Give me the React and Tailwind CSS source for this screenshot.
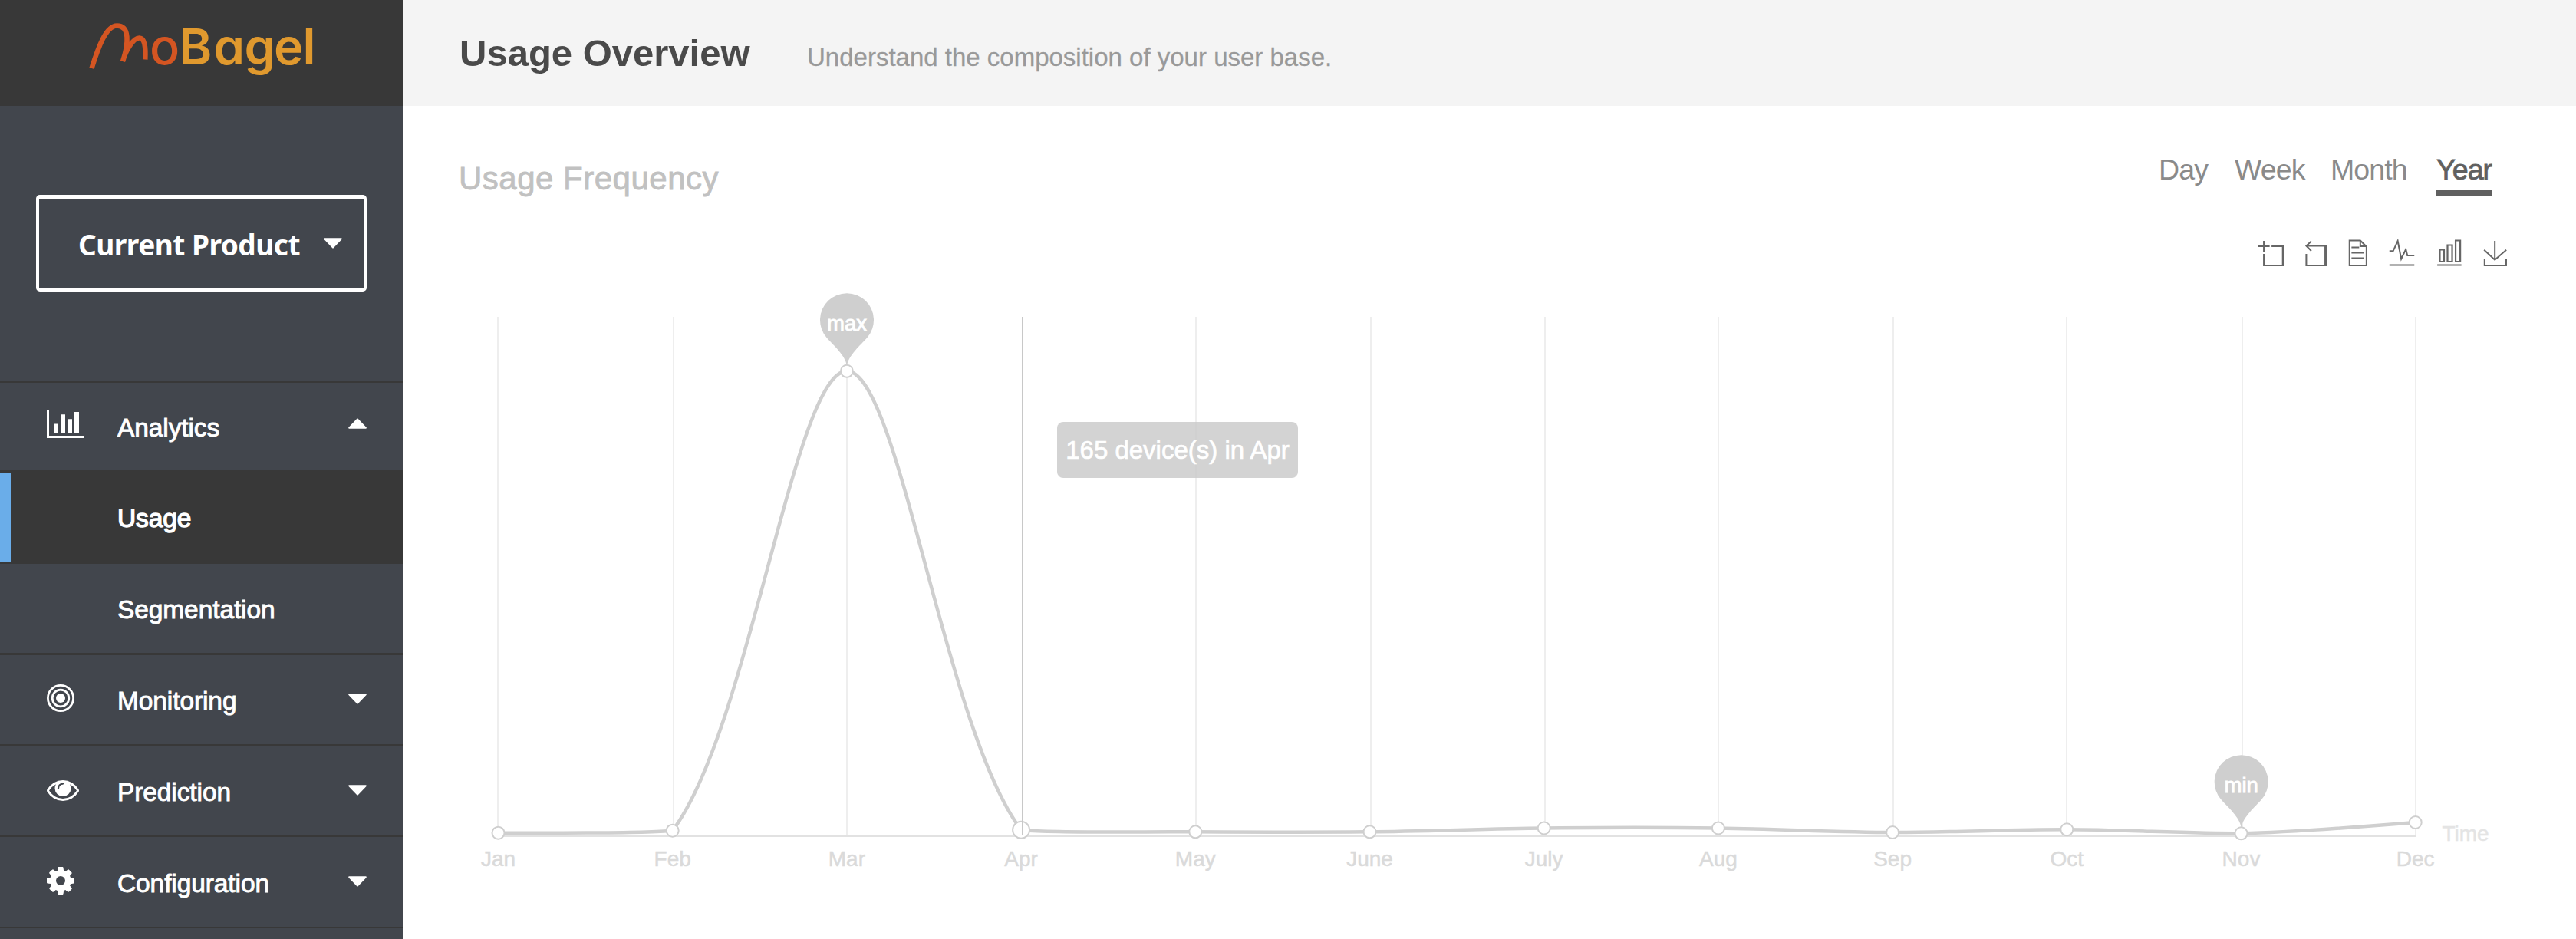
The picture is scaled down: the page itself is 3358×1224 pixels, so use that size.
import React from "react";

const sans = "font-['Liberation_Sans',Arial,sans-serif]";

const months = [
  { name: "Jan", y: 1085.7, grid: 648 },
  { name: "Feb", y: 1082.7, grid: 877 },
  { name: "Mar", y: 483.8, grid: 1103 },
  { name: "Apr", y: 1081.7, grid: 1332 },
  { name: "May", y: 1084.3, grid: 1558 },
  { name: "June", y: 1084.3, grid: 1786 },
  { name: "July", y: 1079.5, grid: 2013 },
  { name: "Aug", y: 1079.5, grid: 2239 },
  { name: "Sep", y: 1085, grid: 2467 },
  { name: "Oct", y: 1081.3, grid: 2693 },
  { name: "Nov", y: 1086.3, grid: 2922 },
  { name: "Dec", y: 1072, grid: 3148 },
].map((m, i) => ({ ...m, x: 649.5 + i * 227.2 }));

const SMOOTH = 0.3;
const clampY = (v) => Math.min(1086.3, Math.max(483.8, v));

function smoothPath(pts) {
  const cps = pts.map((p, i) => {
    const a = pts[i - 1];
    const b = pts[i + 1];
    if (!a || !b) return [p, p];
    const vx = (b.x - a.x) * SMOOTH;
    const vy = (b.y - a.y) * SMOOTH;
    const d0 = Math.hypot(p.x - a.x, p.y - a.y);
    const d1 = Math.hypot(b.x - p.x, b.y - p.y);
    const s = d0 + d1;
    return [
      { x: p.x - (vx * d0) / s, y: clampY(p.y - (vy * d0) / s) },
      { x: p.x + (vx * d1) / s, y: clampY(p.y + (vy * d1) / s) },
    ];
  });
  let d = `M${pts[0].x} ${pts[0].y}`;
  for (let i = 1; i < pts.length; i++) {
    const c1 = cps[i - 1][1];
    const c2 = cps[i][0];
    d += ` C${c1.x} ${c1.y} ${c2.x} ${c2.y} ${pts[i].x} ${pts[i].y}`;
  }
  return d;
}

function Logo() {
  return (
    <svg width="525" height="138" viewBox="0 0 525 138" role="img" aria-label="MoBagel">
      <path
        d="M119.5 89 C128 62 138 33.5 152.5 33.5 C169 33.5 168 56 160 80 C164 65 174 49.5 181.5 49.5 C189 49.5 190 62 189.3 77.5"
        fill="none"
        stroke="#d45522"
        strokeWidth="6.5"
      />
      <text x="195" y="84.3" fill="#d45522" fontSize="65" className="font-['Inter',sans-serif] font-medium">o</text>
      <text
        x="233.5 278.5 318.5 357 394.5"
        y="84.3"
        fill="#e0992e"
        fontSize="65"
        className="font-['Inter',sans-serif] font-semibold [font-feature-settings:'cv11']"
      >
        Bagel
      </text>
    </svg>
  );
}

function BarChartIcon() {
  return (
    <svg width="48" height="37" viewBox="0 128 2048 1536" preserveAspectRatio="none" fill="#fff">
      <path d="M640 896v512h-256v-512h256zm384-512v1024h-256v-1024h256zm1024 1152v128h-2048v-1536h128v1408h1920zm-640-896v768h-256v-768h256zm384-384v1152h-256v-1152h256z" />
    </svg>
  );
}

function BullseyeIcon() {
  return (
    <svg width="36" height="36" viewBox="0 0 36 36" fill="none" stroke="#fff">
      <circle cx="18" cy="18" r="6" fill="#fff" stroke="none" />
      <circle cx="18" cy="18" r="10.8" strokeWidth="2.8" />
      <circle cx="18" cy="18" r="16.6" strokeWidth="2.8" />
    </svg>
  );
}

function EyeIcon() {
  return (
    <svg width="42" height="27" viewBox="0 384 1792 1152" fill="#fff">
      <path d="M1664 960q-152-236-381-353 61 104 61 225 0 185-131.5 316.5t-316.5 131.5-316.5-131.5-131.5-316.5q0-121 61-225-229 117-381 353 133 205 333.5 326.5t434.5 121.5 434.5-121.5 333.5-326.5zm-720-384q0-20-14-34t-34-14q-125 0-214.5 89.5t-89.5 214.5q0 20 14 34t34 14 34-14 14-34q0-86 61-147t147-61q20 0 34-14t14-34zm848 384q0 34-20 69-140 230-376.5 368.5t-499.5 138.5-499.5-139-376.5-368q-20-35-20-69t20-69q140-229 376.5-368t499.5-139 499.5 139 376.5 368q20 35 20 69z" />
    </svg>
  );
}

function CogIcon() {
  return (
    <svg width="36" height="36" viewBox="128 128 1536 1536" fill="#fff">
      <path d="M1152 896q0-106-75-181t-181-75-181 75-75 181 75 181 181 75 181-75 75-181zm512-109v222q0 12-8 23t-20 13l-185 28q-19 54-39 91 35 50 107 138 10 12 10 25t-9 23q-27 37-99 108t-94 71q-12 0-26-9l-138-108q-44 23-91 38-16 136-29 186-7 28-36 28h-222q-14 0-24.5-8.5t-11.5-21.5l-28-184q-49-16-90-37l-141 107q-10 9-25 9-14 0-25-11-126-114-165-168-7-10-7-23 0-12 8-23 15-21 51-66.5t54-70.5q-27-50-41-99l-183-27q-13-2-21-12.5t-8-23.5v-222q0-12 8-23t19-13l186-28q14-46 39-92-40-57-107-138-10-12-10-24 0-10 9-23 26-36 98.5-107.5t94.5-71.5q13 0 26 10l138 107q44-23 91-38 16-136 29-186 7-28 36-28h222q14 0 24.5 8.5t11.5 21.5l28 184q49 16 90 37l142-107q9-9 24-9 13 0 25 10 129 119 165 170 7 8 7 22 0 12-8 23-15 21-51 66.5t-54 70.5q26 50 41 98l183 28q13 2 21 12.5t8 23.5z" />
    </svg>
  );
}

function Caret({ up = false }) {
  return (
    <svg width="24" height="14" viewBox="0 0 24 14" fill="#fff" stroke="#fff" strokeWidth="2" strokeLinejoin="round">
      <path d={up ? "M1.2 12.8 L12 1.4 L22.8 12.8 Z" : "M1.2 1.2 L22.8 1.2 L12 12.6 Z"} />
    </svg>
  );
}

function NavRow({ icon, label, height, up, labelShift, iconShift }) {
  return (
    <div className={`flex shrink-0 items-center pl-[61px] pr-[47px] ${height}`}>
      <div className={`w-[92px] ${iconShift}`}>{icon}</div>
      <div className={`flex-1 text-[33.5px] leading-[40px] tracking-[-0.1px] text-white [-webkit-text-stroke:0.9px_#fff] ${labelShift}`}>{label}</div>
      {up !== undefined && (
        <div className={up ? "-mt-[8px]" : "-mt-[2px]"}>
          <Caret up={up} />
        </div>
      )}
    </div>
  );
}

function Sidebar() {
  return (
    <aside className="flex h-[1224px] w-[525px] shrink-0 flex-col overflow-hidden bg-[#42464d]">
      <div className="h-[138px] shrink-0 bg-[#383838]">
        <Logo />
      </div>
      <div className="h-[359px] shrink-0 pl-[47px] pt-[116px]">
        <button className="flex h-[126px] w-[431px] items-center justify-between rounded-[5px] border-[4px] border-t-[5px] border-b-[5px] border-white pl-[51px] pr-[28px]">
          <span className="mt-[3px] whitespace-nowrap font-['Noto_Sans',sans-serif] text-[37px] font-bold leading-[48px] tracking-[-0.5px] text-white">
            Current Product
          </span>
          <span>
            <Caret />
          </span>
        </button>
      </div>
      <div className="h-[2px] shrink-0 bg-[#383838]" />
      <NavRow icon={<BarChartIcon />} label="Analytics" height="h-[114px]" up labelShift="mt-[3px]" iconShift="-mt-[7px]" />
      <div className="flex h-[122px] shrink-0 items-center bg-[#383838]">
        <div className="h-[116px] w-[14px] bg-[#6aade9]" />
        <div className="ml-[139px] mt-[4px] text-[33.5px] leading-[40px] tracking-[-0.1px] text-white [-webkit-text-stroke:1.3px_#fff]">Usage</div>
      </div>
      <NavRow icon={null} label="Segmentation" height="h-[116px]" labelShift="mt-[3px]" iconShift="" />
      <div className="h-[3px] shrink-0 bg-[#383838]" />
      <NavRow icon={<BullseyeIcon />} label="Monitoring" height="h-[116px]" up={false} labelShift="mt-[4px]" iconShift="-mt-[5px]" />
      <div className="h-[2px] shrink-0 bg-[#383838]" />
      <NavRow icon={<EyeIcon />} label="Prediction" height="h-[117px]" up={false} labelShift="mt-[4px]" iconShift="" />
      <div className="h-[2px] shrink-0 bg-[#383838]" />
      <NavRow icon={<CogIcon />} label="Configuration" height="h-[117px]" up={false} labelShift="mt-[4px]" iconShift="-mt-[4px]" />
      <div className="h-[2px] shrink-0 bg-[#383838]" />
    </aside>
  );
}

function Toolbox() {
  return (
    <svg width="334" height="40" viewBox="2938 310 332 40" preserveAspectRatio="none" fill="none" stroke="#666" strokeWidth="2">
      <path d="M2950 314V328.500M2942.500 321H2957.500M2960 321H2975V346H2950V331" />
      <path d="M2975 320.500V346" strokeWidth="3" />
      <path d="M3011.500 314.500L3005 320.500L3011.500 327M3005 320.500H3031V346H3005V331" />
      <path d="M3030 320.500V346" strokeWidth="3" />
      <path d="M3061 313.500H3075L3083 321.500V346H3061ZM3075 313.500V321H3083M3063.600 322.500H3073.500M3063.600 329.500H3080M3063.600 336.500H3080" />
      <path d="M3112.700 327.300H3117.500L3123.500 314L3128 337.500L3134 325L3136 333H3145M3112.700 345.500H3145" />
      <path d="M3178 325.500H3183.500V341H3178ZM3188 319.500H3194V341H3188ZM3198.500 313.500H3204.500V341H3198.500ZM3174.700 345.500H3206" strokeWidth="2.200" />
      <path d="M3249.300 314V338.500M3235.400 325.700L3249.300 338.700L3264.200 325.700M3236 337.700V346H3264V337.700" />
    </svg>
  );
}

function Pin({ x, y, label }) {
  return (
    <g transform={`translate(${x} ${y})`}>
      <path d="M0 60C-2 46 -17.500 33.400 -26.500 23A35 35 0 1 1 26.500 23C17.500 33.400 2 46 0 60Z" fill="#cfcfcf" />
      <text y="13.500" textAnchor="middle" fontSize="27.500" fill="#fff" stroke="#fff" strokeWidth="0.900">
        {label}
      </text>
    </g>
  );
}

function Chart() {
  return (
    <svg width="2833" height="844" viewBox="525 380 2833 844" className={sans}>
      {months.map((m) => (
        <rect key={m.name} x={m.grid} y="413" width="2" height="676" fill={m.name === "Apr" ? "#c8c8c8" : "#eeeeee"} />
      ))}
      <rect x="649" y="1089" width="2501" height="2" fill="#e2e2e2" />
      <path d={smoothPath(months)} fill="none" stroke="#cfcfcf" strokeWidth="4.500" />
      {months.map((m) => (
        <circle key={m.name} cx={m.x} cy={m.y} r={m.name === "Apr" ? 11 : 8} fill="#fff" stroke="#cfcfcf" strokeWidth="2" />
      ))}
      <rect x="1332" y="1070" width="2" height="19" fill="#c8c8c8" />
      <Pin x={1104} y={417} label="max" />
      <Pin x={2921.7} y={1019} label="min" />
      {months.map((m) => (
        <text key={m.name} x={m.x} y="1129" textAnchor="middle" fontSize="28" fill="#dadada" stroke="#dadada" strokeWidth="0.500">
          {m.name}
        </text>
      ))}
      <text x="3183.500" y="1096" fontSize="28" fill="#e4e4e4" stroke="#e4e4e4" strokeWidth="0.500">
        Time
      </text>
    </svg>
  );
}

export default function App() {
  return (
    <div className={`flex h-[1224px] w-[3358px] overflow-hidden bg-white ${sans}`}>
      <Sidebar />
      <main className="flex min-w-0 flex-1 flex-col">
        <header className="flex h-[138px] shrink-0 items-baseline bg-[#f4f4f4] pl-[74px] pt-[41px]">
          <h1 className="w-[453px] whitespace-nowrap text-[49px] font-bold leading-[56px] text-[#4a4a4a]">Usage Overview</h1>
          <p className="whitespace-nowrap text-[33px] text-[#999] [-webkit-text-stroke:0.3px_#999]">Understand the composition of your user base.</p>
        </header>
        <div className="flex h-[242px] shrink-0 justify-between pl-[73px]">
          <h2 className="mt-[71px] whitespace-nowrap text-[42px] leading-[48px] tracking-[0.5px] text-[#c1c1c1] [-webkit-text-stroke:0.8px_#c1c1c1]">Usage Frequency</h2>
          <div className="flex flex-col items-end">
            <nav className="mr-[110px] mt-[61px] flex text-[37.5px] leading-[44px] tracking-[-0.9px] text-[#8a8a8a]">
              <span className="w-[99px]">Day</span>
              <span className="w-[125px]">Week</span>
              <span className="w-[138px]">Month</span>
              <span className="w-[72px] border-b-[7px] border-[#606060] pb-[5px] text-[#606060] [-webkit-text-stroke:0.8px_#606060]">Year</span>
            </nav>
            <div className="mr-[85px] mt-[55px]">
              <Toolbox />
            </div>
          </div>
        </div>
        <section className="relative shrink-0">
          <Chart />
          <div className="absolute left-[853px] top-[170px] flex h-[73px] w-[314px] items-center justify-center whitespace-nowrap rounded-[8px] bg-[#c8c8c8]/80 text-[33px] text-white [-webkit-text-stroke:0.7px_#fff]">
            165 device(s) in Apr
          </div>
        </section>
      </main>
    </div>
  );
}
